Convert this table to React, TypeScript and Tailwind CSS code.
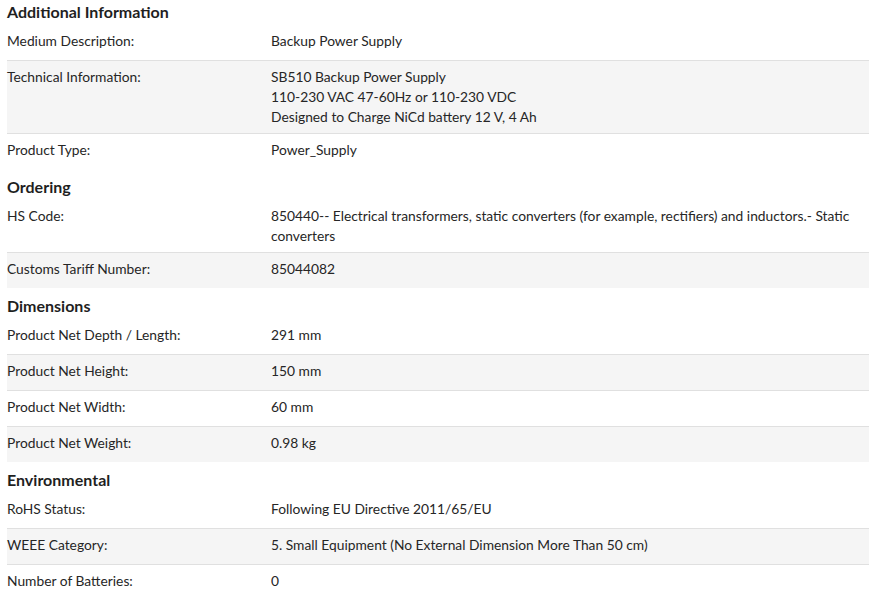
import React from "react";

type Row = { label: string; value: string[] };
type Section = { title: string; rows: Row[] };

const SECTIONS: Section[] = [
  {
    title: "Additional Information",
    rows: [
      { label: "Medium Description:", value: ["Backup Power Supply"] },
      {
        label: "Technical Information:",
        value: [
          "SB510 Backup Power Supply",
          "110-230 VAC 47-60Hz or 110-230 VDC",
          "Designed to Charge NiCd battery 12 V, 4 Ah",
        ],
      },
      { label: "Product Type:", value: ["Power_Supply"] },
    ],
  },
  {
    title: "Ordering",
    rows: [
      {
        label: "HS Code:",
        value: [
          "850440-- Electrical transformers, static converters (for example, rectifiers) and inductors.- Static converters",
        ],
      },
      { label: "Customs Tariff Number:", value: ["85044082"] },
    ],
  },
  {
    title: "Dimensions",
    rows: [
      { label: "Product Net Depth / Length:", value: ["291 mm"] },
      { label: "Product Net Height:", value: ["150 mm"] },
      { label: "Product Net Width:", value: ["60 mm"] },
      { label: "Product Net Weight:", value: ["0.98 kg"] },
    ],
  },
  {
    title: "Environmental",
    rows: [
      { label: "RoHS Status:", value: ["Following EU Directive 2011/65/EU"] },
      { label: "WEEE Category:", value: ["5. Small Equipment (No External Dimension More Than 50 cm)"] },
      { label: "Number of Batteries:", value: ["0"] },
    ],
  },
];

const App: React.FC = () => {
  return (
    <div className="bg-white pl-[7px] text-[13.8px] leading-5 text-[#262626] font-['Lato',sans-serif] overflow-hidden h-[598px]">
      {SECTIONS.map((section, si) => (
        <div key={section.title}>
          {/* HEADING */}
          <h2
            className={`h-6 text-base font-bold leading-6 text-[#1f1f1f] ${si === 0 ? "" : "mt-[6px]"}`}
          >
            {section.title}
          </h2>

          {/* ROWS */}
          <div>
            {section.rows.map((row, ri) => (
              <div
                key={row.label}
                className={`flex min-h-[36px] pt-[6px] pb-[6px] border-t ${
                  ri === 0 ? "border-transparent" : "border-[#e0e0e0]"
                } ${ri % 2 === 1 ? "bg-[#f5f5f5]" : ""}`}
              >
                <div className="w-[264px] shrink-0">{row.label}</div>
                <div className="flex-1 pr-3">
                  {row.value.map(line => (
                    <div key={line}>{line}</div>
                  ))}
                </div>
              </div>
            ))}
          </div>
        </div>
      ))}
    </div>
  );
};

export default App;
